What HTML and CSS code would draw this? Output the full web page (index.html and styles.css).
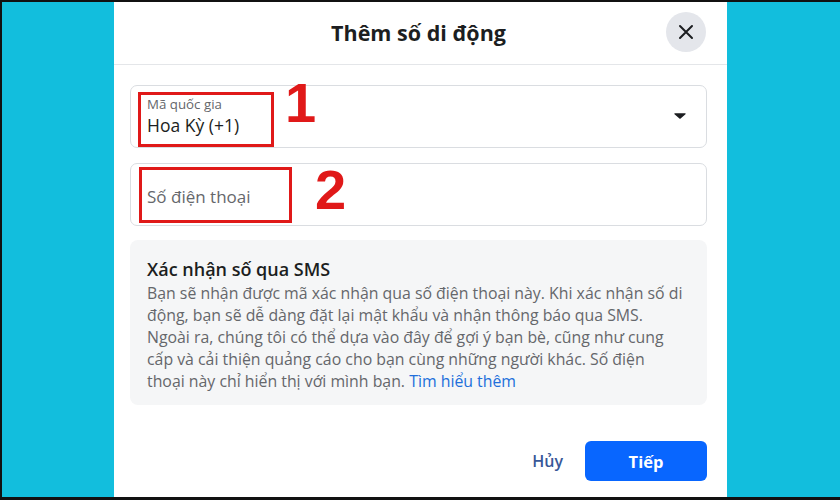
FILE: index.html
```html
<!DOCTYPE html>
<html lang="vi">
<head>
<meta charset="utf-8">
<title>Thêm số di động</title>
<link rel="stylesheet" href="styles.css">
</head>
<body>
<div class="frame">
  <div class="dialog">
    <header class="head">
      <h1 class="title">Thêm số di động</h1>
      <button class="close" aria-label="Đóng">
        <svg width="20" height="20" viewBox="0 0 20 20"><path d="M4 4L16 16M16 4L4 16" stroke="#1c1e21" stroke-width="2" stroke-linecap="round"/></svg>
      </button>
    </header>
    <div class="content">
      <div class="field select">
        <div class="field-text">
          <span class="label">Mã quốc gia</span>
          <span class="value">Hoa Kỳ (+1)</span>
        </div>
        <svg class="caret" width="12" height="8" viewBox="0 0 12 8"><path d="M1 1.2h10c.6 0 .9.7.5 1.1L6.6 6.6c-.3.3-.9.3-1.2 0L.5 2.3C.1 1.9.4 1.2 1 1.2z" fill="#1c1e21"/></svg>
        <span class="mark mark1"></span>
        <span class="num num1">1</span>
      </div>
      <div class="field input">
        <span class="placeholder">Số điện thoại</span>
        <span class="mark mark2"></span>
        <span class="num num2">2</span>
      </div>
      <section class="info">
        <h2 class="info-title">Xác nhận số qua SMS</h2>
        <p class="info-text">Bạn sẽ nhận được mã xác nhận qua số điện thoại này. Khi xác nhận số di động, bạn sẽ dễ dàng đặt lại mật khẩu và nhận thông báo qua SMS. Ngoài ra, chúng tôi có thể dựa vào đây để gợi ý bạn bè, cũng như cung cấp và cải thiện quảng cáo cho bạn cùng những người khác. Số điện thoại này chỉ hiển thị với mình bạn. <a class="link" href="#">Tìm hiểu thêm</a></p>
      </section>
    </div>
    <footer class="foot">
      <button class="btn-cancel">Hủy</button>
      <button class="btn-next">Tiếp</button>
    </footer>
  </div>
</div>
</body>
</html>
```

FILE: styles.css
```css
html, body {
  margin: 0;
  padding: 0;
  height: 100%;
}
body {
  background: #000;
  font-family: "Open Sans", "Noto Sans", sans-serif;
  color: #1c1e21;
}
.frame {
  box-sizing: border-box;
  height: 500px;
  width: 840px;
  border-top: 2px solid #111;
  border-left: 2px solid #111;
  border-bottom: 3px solid #111;
  background: #12bedd;
  overflow: hidden;
}
.dialog {
  margin-left: 112px;
  width: 613px;
  height: 100%;
  background: #fff;
  display: flex;
  flex-direction: column;
}
.head {
  position: relative;
  height: 62px;
  border-bottom: 1px solid #e4e6e9;
  display: flex;
  align-items: center;
  justify-content: center;
}
.title {
  margin: 0 0 2px -4px;
  font-size: 21.5px;
  font-weight: 700;
}
.close {
  position: absolute;
  right: 21px;
  top: 10px;
  width: 40px;
  height: 40px;
  border: 0;
  border-radius: 50%;
  background: #e4e6eb;
  display: flex;
  align-items: center;
  justify-content: center;
  padding: 0;
}
.content {
  padding: 20px 20px 0 16px;
  display: flex;
  flex-direction: column;
  gap: 15px;
}
.field {
  position: relative;
  box-sizing: border-box;
  height: 63px;
  border: 1px solid #dadde1;
  border-radius: 7px;
  display: flex;
  align-items: center;
  padding: 0 16px;
}
.field-text {
  display: flex;
  flex-direction: column;
  flex: 1;
  padding-top: 1px;
}
.label {
  font-size: 13.3px;
  color: #65676b;
  line-height: 17px;
}
.value {
  font-size: 17.5px;
  line-height: 25px;
  color: #1c1e21;
}
.caret {
  margin-right: 4px;
  margin-top: -2px;
}
.placeholder {
  font-size: 17px;
  color: #65676b;
  padding-top: 3px;
}
.mark {
  position: absolute;
  border: 3px solid #e01919;
  box-sizing: border-box;
}
.mark1 { left: 7px; top: 6px; width: 136px; height: 55px; }
.mark2 { left: 8px; top: 3px; width: 153px; height: 56px; }
.num {
  position: absolute;
  font-family: "Liberation Sans", Arial, sans-serif;
  font-weight: 700;
  font-size: 56px;
  line-height: 56px;
  color: #e01919;
}
.num1 { left: 154px; top: -11px; }
.num2 { left: 184px; top: -2px; }
.info {
  margin-top: -1px;
  background: #f5f6f7;
  border-radius: 8px;
  padding: 17px 22px 13px 17px;
}
.info-title {
  margin: 0 0 1px;
  font-size: 18px;
  font-weight: 600;
  line-height: 24px;
  color: #1c1e21;
}
.info-text {
  margin: 0;
  font-size: 15.85px;
  line-height: 22px;
  color: #65676b;
}
.link {
  color: #216fdb;
  text-decoration: none;
}
.foot {
  margin-top: auto;
  padding: 0 20px 16px;
  display: flex;
  justify-content: flex-end;
  align-items: center;
  gap: 22px;
}
.btn-cancel {
  border: 0;
  background: none;
  font-family: inherit;
  font-size: 16px;
  font-weight: 600;
  color: #385898;
  padding: 0;
}
.btn-next {
  border: 0;
  background: #0866ff;
  color: #fff;
  font-family: inherit;
  font-size: 16.5px;
  font-weight: 700;
  width: 122px;
  height: 40px;
  border-radius: 6px;
}
```
